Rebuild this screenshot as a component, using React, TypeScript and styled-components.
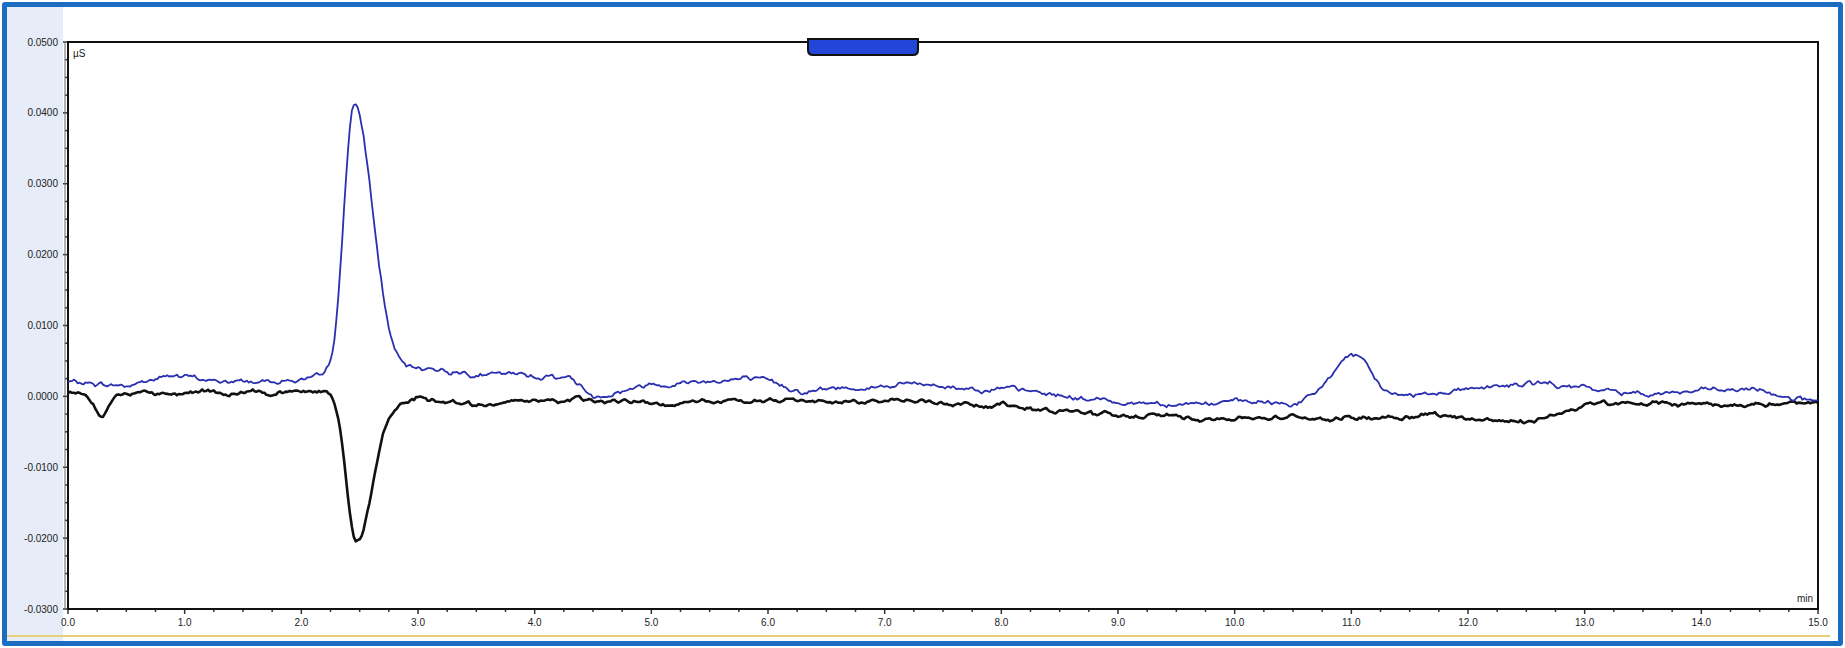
import React from "react";
import styled, { createGlobalStyle } from "styled-components";

const Global = createGlobalStyle`
  html, body { margin: 0; padding: 0; background: #fff; }
  body { font-family: "Liberation Sans", Arial, sans-serif; }
`;

const Frame = styled.div`
  margin: 2px;
  height: 634px;
  border: 5px solid #1c6dc2;
  border-radius: 3px;
  background: linear-gradient(to right, #e6edf8 56px, #ffffff 56px);
  display: flex;
  flex-direction: column;
  overflow: hidden;
`;

const Chart = styled.svg`
  display: block;
  flex: 1;
`;

const BottomRule = styled.div`
  height: 2px;
  margin: 0 8px 4px 0;
  background: #e8cf7a;
`;

const OX = 7;
const X0 = 68 - OX, X1 = 1818 - OX, YT = 42 - OX, YB = 609 - OX;
const sx = (t: number) => X0 + (t / 15) * (X1 - X0);
const sy = (v: number) => YT + ((0.05 - v) / 0.08) * (YB - YT);

function rng(seed: number) {
  let s = seed;
  return () => {
    s = (s * 1103515245 + 12345) % 2147483648;
    return s / 2147483648 - 0.5;
  };
}

const gauss = (t: number, c: number, w: number) => Math.exp(-((t - c) * (t - c)) / (2 * w * w));
const interp = (t: number, pts: number[][]) => {
  for (let i = 0; i < pts.length - 1; i++) {
    if (t >= pts[i][0] && t <= pts[i + 1][0]) {
      const f = (t - pts[i][0]) / (pts[i + 1][0] - pts[i][0]);
      return pts[i][1] + f * (pts[i + 1][1] - pts[i][1]);
    }
  }
  return pts[pts.length - 1][1];
};

function makePath(base: number[][], peaks: number[][], seed: number, amp: number) {
  const r = rng(seed);
  const N = 900;
  let n1 = 0, n2 = 0;
  const pts: string[] = [];
  for (let i = 0; i <= N; i++) {
    const t = (i / N) * 15;
    n1 = n1 * 0.85 + r() * amp;
    n2 = n2 * 0.5 + r() * amp * 0.6;
    let v = interp(t, base) + n1 + n2;
    for (const p of peaks) v += p[2] * gauss(t, p[0], t < p[0] ? p[1] : p[1] * (p[3] || 1));
    pts.push(`${i ? "L" : "M"}${sx(t).toFixed(1)},${sy(v).toFixed(1)}`);
  }
  return pts.join(" ");
}

const bluePath = makePath(
  [[0, 0.002], [0.5, 0.0015], [0.9, 0.003], [1.3, 0.002], [2.2, 0.0025], [2.8, 0.003], [3.1, 0.004], [3.6, 0.003], [4.3, 0.0028], [4.5, 0.0], [5.0, 0.0018], [5.8, 0.0025], [6.3, 0.0008], [7.2, 0.0018], [8.0, 0.001], [9.0, -0.0008], [10.5, -0.001], [10.8, 0.0], [11.4, 0.0], [12.0, 0.0012], [12.6, 0.0018], [13.3, 0.0005], [14.5, 0.0008], [15, -0.0008]],
  [[2.45, 0.085, 0.0385, 1.9], [11.0, 0.15, 0.0058, 1]],
  7, 0.00045
);
const blackPath = makePath(
  [[0, 0.0005], [0.3, 0.0003], [0.7, 0.0005], [1.5, 0.0008], [2.2, 0.0008], [2.8, -0.001], [3.0, 0.0], [3.5, -0.0012], [4.5, -0.0005], [5.0, -0.001], [6.0, -0.0008], [7.0, -0.0005], [8.0, -0.0012], [9.0, -0.0028], [10.0, -0.003], [11.0, -0.003], [11.7, -0.0025], [12.5, -0.0038], [13.0, -0.0012], [14.0, -0.001], [15, -0.0012]],
  [[0.28, 0.06, -0.003, 1], [2.47, 0.085, -0.0205, 1.6]],
  3, 0.0004
);

const yLabels = [0.05, 0.04, 0.03, 0.02, 0.01, 0, -0.01, -0.02, -0.03];
const fmt = (v: number) => (v < 0 ? "-" : "") + Math.abs(v).toFixed(4);

export default function App() {
  const minorY: number[] = [];
  for (let v = -0.03; v <= 0.0501; v += 0.0025) minorY.push(v);
  const minorX: number[] = [];
  for (let t = 0; t <= 15.001; t += 0.25) minorX.push(t);
  return (
    <>
      <Global />
      <Frame>
        <Chart width="1831" height="628">
          <g fill="#222" fontSize="10" fontFamily="Liberation Sans, Arial, sans-serif">
            {yLabels.map((v) => (
              <text key={v} x={X0 - 10} y={sy(v) + 3.5} textAnchor="end">{fmt(v)}</text>
            ))}
            {Array.from({ length: 16 }, (_, i) => (
              <text key={i} x={sx(i)} y={YB + 17} textAnchor="middle">{i.toFixed(1)}</text>
            ))}
            <text x={X0 + 5} y={YT + 15}>µS</text>
            <text x={X1 - 5} y={YB - 7} textAnchor="end">min</text>
          </g>
          <g stroke="#333" strokeWidth="1.5">
            {minorY.map((v, i) => (
              <line key={i} x1={X0 - (i % 4 === 0 ? 5 : 3)} x2={X0} y1={sy(v)} y2={sy(v)} />
            ))}
            {minorX.map((t, i) => (
              <line key={i} x1={sx(t)} x2={sx(t)} y1={YB} y2={YB + (i % 4 === 0 ? 5 : 3)} />
            ))}
          </g>
          <rect x={X0} y={YT} width={X1 - X0} height={YB - YT} fill="none" stroke="#111" strokeWidth="2" />
          <line x1={X0 - 3} x2={X0 - 3} y1={YT} y2={YB} stroke="#666" strokeWidth="1" />
          <path d={blackPath} fill="none" stroke="#111" strokeWidth="2.6" strokeLinejoin="round" />
          <path d={bluePath} fill="none" stroke="#2a2fb0" strokeWidth="1.8" strokeLinejoin="round" />
          <path d={`M${808 - OX},${39 - OX} h110 v11 q0,5 -5,5 h-100 q-5,0 -5,-5 z`} fill="#2446d8" stroke="#111" strokeWidth="2" />
        </Chart>
        <BottomRule />
      </Frame>
    </>
  );
}
